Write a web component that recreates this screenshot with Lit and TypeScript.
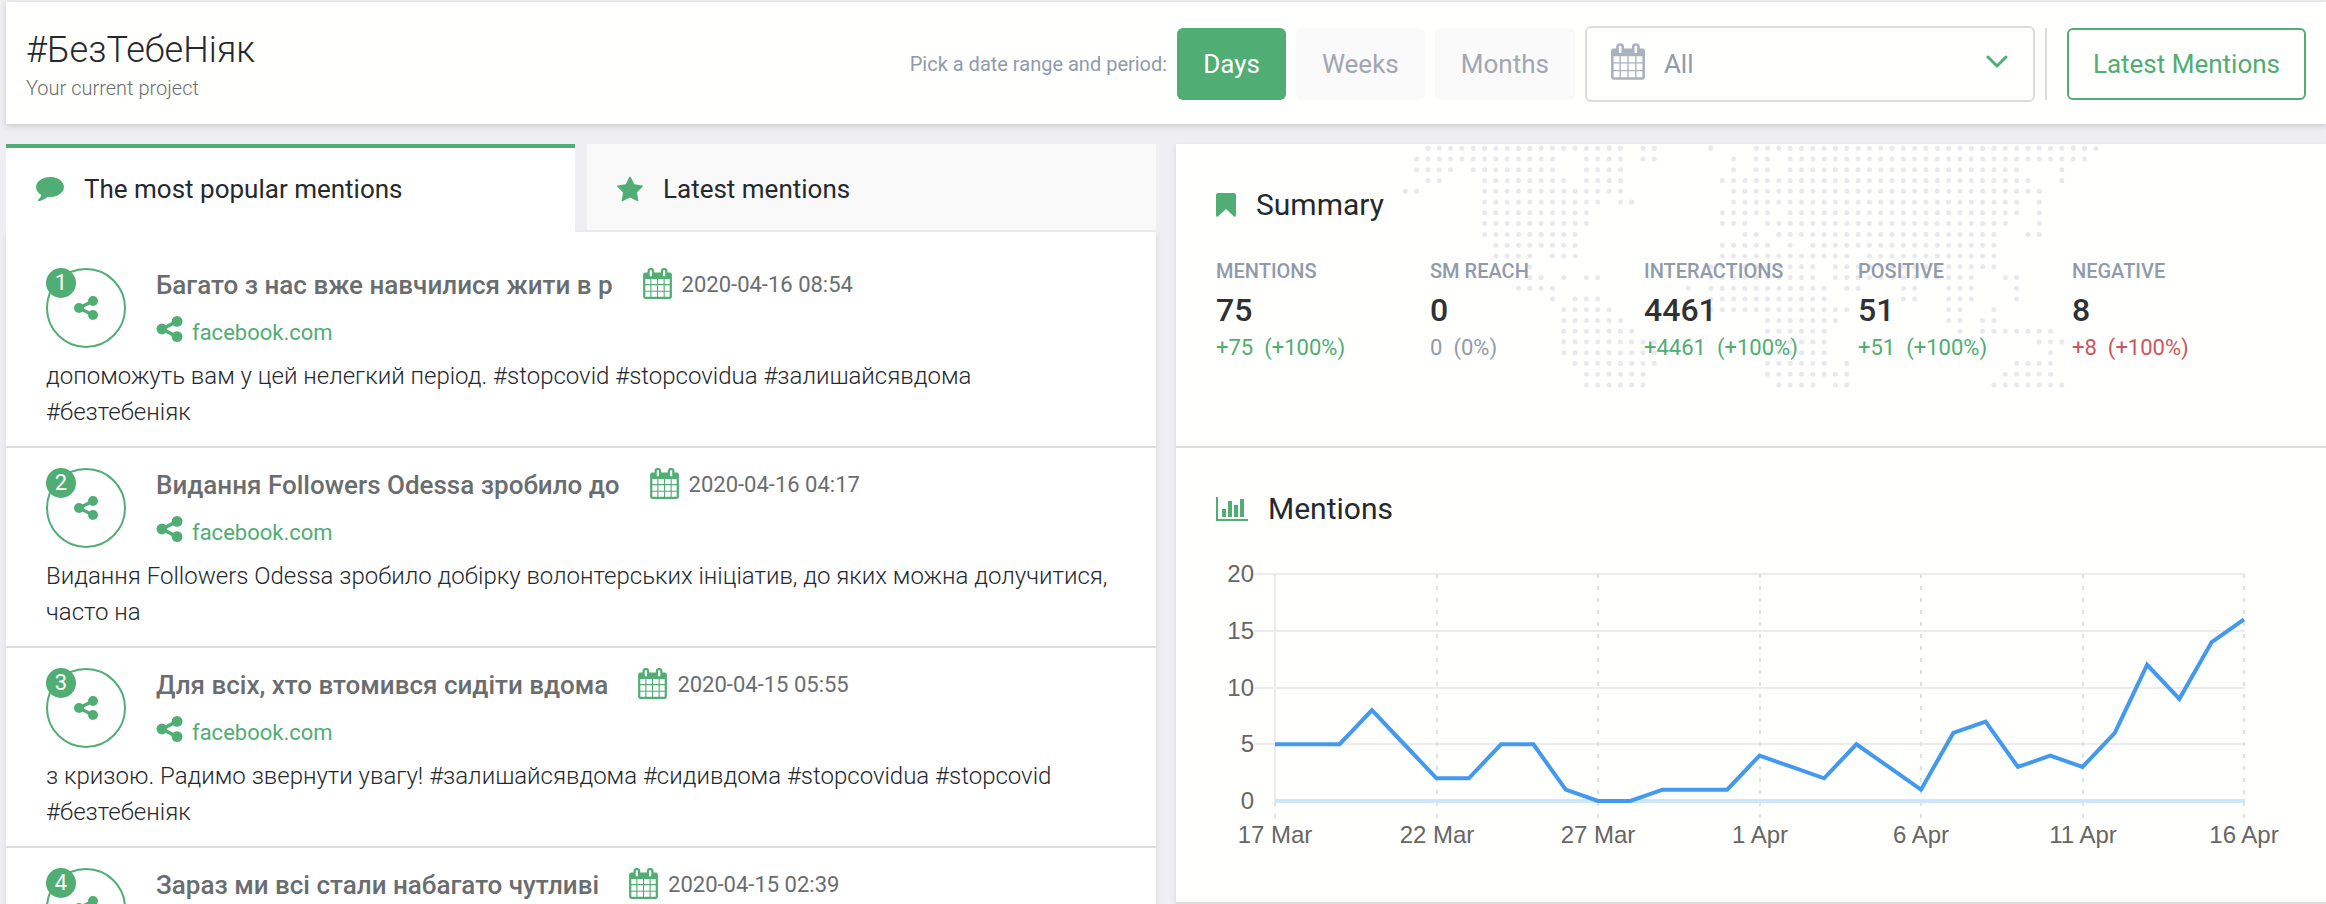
import { LitElement, html, svg, css } from "lit";
import { customElement, state, property } from "lit/decorators.js";
import { classMap } from "lit/directives/class-map.js";

const CALENDAR =
  "M128 1664h288v-288h-288v288zm352 0h320v-288h-320v288zm-352-352h288v-320h-288v320zm352 0h320v-320h-320v320zm-352-384h288v-288h-288v288zm736 736h320v-288h-320v288zm-384-736h320v-288h-320v288zm768 736h288v-288h-288v288zm-384-352h320v-320h-320v320zm-352-864v-288q0-13-9.5-22.5t-22.5-9.5h-64q-13 0-22.5 9.5t-9.5 22.5v288q0 13 9.5 22.5t22.5 9.5h64q13 0 22.5-9.5t9.5-22.5zm736 864h288v-320h-288v320zm-384-384h320v-288h-320v288zm384 0h288v-288h-288v288zm32-480v-288q0-13-9.5-22.5t-22.5-9.5h-64q-13 0-22.5 9.5t-9.5 22.5v288q0 13 9.5 22.5t22.5 9.5h64q13 0 22.5-9.5t9.5-22.5zm384-64v1280q0 52-38 90t-90 38h-1408q-52 0-90-38t-38-90v-1280q0-52 38-90t90-38h128v-96q0-66 47-113t113-47h64q66 0 113 47t47 113v96h384v-96q0-66 47-113t113-47h64q66 0 113 47t47 113v96h128q52 0 90 38t38 90z";

const COMMENT =
  "M1792 896q0 174-120 321.5t-326 233-450 85.5q-70 0-145-8-198 175-460 242-49 14-114 22-17 2-30.5-9t-17.5-29v-1q-3-4-.5-12t2-10 4.5-9.5l6-9 7-8.5 8-9q7-8 31-34.5t34.5-38 31-39.5 32.5-51 27-59 26-76q-157-89-247.5-220t-90.5-281q0-130 71-248.5t191-204.5 286-136.5 348-50.5q244 0 450 85.5t326 233 120 321.5z";

const STAR =
  "M1728 647q0 22-26 48l-363 354 86 500q1 7 1 20 0 21-10.5 35.5t-30.5 14.5q-19 0-40-12l-449-236-449 236q-22 12-40 12-21 0-31.5-14.5t-10.5-35.5q0-6 2-20l86-500-364-354q-25-27-25-48 0-37 56-46l502-73 225-455q19-41 49-41t49 41l225 455 502 73q56 9 56 46z";

const calendarIcon = (cls: string) => html`
  <svg class=${cls} viewBox="0 0 1664 1792" aria-hidden="true"><path fill="currentColor" d=${CALENDAR} /></svg>
`;

const shareIcon = (cls: string) => html`
  <svg class=${cls} viewBox="0 0 24 24" aria-hidden="true">
    <path d="M19 5 L5 12 L19 19" fill="none" stroke="currentColor" stroke-width="3.2" />
    <g fill="currentColor">
      <circle cx="19" cy="5" r="5" />
      <circle cx="5" cy="12" r="5" />
      <circle cx="19" cy="19" r="5" />
    </g>
  </svg>
`;

interface Mention {
  title: string;
  date: string;
  site: string;
  text: string;
}

const MENTIONS: Mention[] = [
  {
    title: "Багато з нас вже навчилися жити в р",
    date: "2020-04-16 08:54",
    site: "facebook.com",
    text: "допоможуть вам у цей нелегкий період. #stopcovid #stopcovidua #залишайсявдома #безтебеніяк",
  },
  {
    title: "Видання Followers Odessa зробило до",
    date: "2020-04-16 04:17",
    site: "facebook.com",
    text: "Видання Followers Odessa зробило добірку волонтерських ініціатив, до яких можна долучитися, часто на",
  },
  {
    title: "Для всіх, хто втомився сидіти вдома",
    date: "2020-04-15 05:55",
    site: "facebook.com",
    text: "з кризою. Радимо звернути увагу! #залишайсявдома #сидивдома #stopcovidua #stopcovid #безтебеніяк",
  },
  {
    title: "Зараз ми всі стали набагато чутливі",
    date: "2020-04-15 02:39",
    site: "",
    text: "",
  },
];

const STATS = [
  { label: "Mentions", value: "75", change: "+75", percent: "(+100%)", tone: "up" },
  { label: "SM reach", value: "0", change: "0", percent: "(0%)", tone: "flat" },
  { label: "Interactions", value: "4461", change: "+4461", percent: "(+100%)", tone: "up" },
  { label: "Positive", value: "51", change: "+51", percent: "(+100%)", tone: "up" },
  { label: "Negative", value: "8", change: "+8", percent: "(+100%)", tone: "down" },
];

// Runs of filled columns [first, last] for every row of the dotted world map.
const MAP_ROWS: number[][][] = [
  [[2, 19], [21, 22], [27, 27], [31, 61]],
  [[1, 13], [16, 19], [21, 22], [29, 29], [31, 32], [34, 60]],
  [[1, 4], [6, 13], [16, 19], [29, 29], [31, 32], [34, 54], [58, 58]],
  [[2, 3], [7, 14], [16, 19], [28, 55], [58, 58]],
  [[0, 1], [7, 19], [29, 56]],
  [[7, 17], [19, 20], [29, 54], [56, 56]],
  [[7, 16], [28, 32], [34, 54], [56, 56]],
  [[7, 16], [28, 30], [32, 53], [56, 56]],
  [[7, 15], [30, 31], [33, 52], [55, 56]],
  [[8, 15], [28, 32], [34, 34], [36, 52]],
  [[8, 11], [13, 15], [28, 39], [41, 52]],
  [[11, 11], [27, 36], [38, 52]],
  [[11, 12], [14, 14], [16, 17], [27, 36], [38, 50], [53, 54]],
  [[10, 13], [25, 25], [27, 37], [39, 40], [44, 45], [48, 50], [54, 54]],
  [[13, 13], [15, 17], [27, 37], [44, 45], [48, 50], [54, 54]],
  [[14, 18], [27, 39], [48, 49], [52, 52]],
  [[14, 19], [32, 38], [48, 49], [51, 52]],
  [[14, 20], [32, 37], [49, 49], [51, 57]],
  [[14, 22], [33, 37], [49, 50], [56, 58]],
  [[14, 22], [32, 37], [57, 57]],
  [[15, 22], [32, 37], [39, 39], [54, 57]],
  [[16, 21], [32, 39], [53, 57]],
  [[16, 21], [33, 36], [38, 39], [52, 58]],
];

@customElement("world-dots")
export class WorldDots extends LitElement {
  static styles = css`
    :host {
      display: block;
    }
    .map {
      display: block;
      width: 702px;
      height: 248px;
    }
  `;

  render() {
    return html`
      <svg class="map" viewBox="0 0 702 248" fill="#e8e8ee" aria-hidden="true">
        ${MAP_ROWS.flatMap((runs, row) =>
          runs.flatMap(([first, last]) =>
            Array.from(
              { length: last - first + 1 },
              (_, i) => svg`<circle cx=${5.3 + 11.32 * (first + i)} cy=${4.3 + 10.76 * row} r="2.5" />`
            )
          )
        )}
      </svg>
    `;
  }
}

const SERIES = [
  5, 5, 5, 8, 5, 2, 2, 5, 5, 1, 0, 0, 1, 1, 1, 4, 3, 2, 5, 3, 1, 6, 7, 3, 4, 3, 6, 12, 9, 14, 16,
];
const DAY_LABELS = ["17 Mar", "22 Mar", "27 Mar", "1 Apr", "6 Apr", "11 Apr", "16 Apr"];

@customElement("mentions-chart")
export class MentionsChart extends LitElement {
  static styles = css`
    :host {
      display: block;
    }
    .chart {
      display: block;
      width: 100%;
      font-family: "Liberation Sans", Arial, sans-serif;
      font-size: 24px;
    }
  `;

  render() {
    const left = 59;
    const right = 1028;
    const top = 14;
    const bottom = 241;
    const x = (day: number) => left + ((right - left) * day) / 30;
    const y = (value: number) => bottom - ((bottom - top) * value) / 20;
    const points = SERIES.map((v, i) => `${x(i)},${y(v)}`).join(" ");
    return html`
      <svg class="chart" viewBox="0 0 1070 300" role="img" aria-label="Mentions per day">
        ${[20, 15, 10, 5, 0].map(
          (v) => svg`
            ${v ? svg`<line x1="38" x2=${right + 1} y1=${Math.round(y(v))} y2=${Math.round(y(v))} stroke="#ececec" stroke-width="2" />` : ""}
            <text x="38" y=${Math.round(y(v)) + 8} text-anchor="end" fill="#666">${v}</text>`
        )}
        <line x1=${left} x2=${left} y1=${top} y2=${bottom} stroke="#ececec" stroke-width="2" />
        ${DAY_LABELS.map((label, i) => {
          const px = Math.round(x(i * 5));
          return svg`
            <line x1=${px} x2=${px} y1=${i ? top : bottom} y2="258" stroke="#e0e0e0" stroke-width="2"
              stroke-dasharray="4 8" stroke-dashoffset=${i ? 0 : 11} />
            <text x=${px} y="283" text-anchor="middle" fill="#666">${label}</text>`;
        })}
        <line x1=${left} x2=${right + 1} y1=${bottom} y2=${bottom} stroke="#cce6fd" stroke-width="4" />
        <polyline points=${points} fill="none" stroke="#4299ee" stroke-width="4" />
      </svg>
    `;
  }
}

@customElement("mention-item")
export class MentionItem extends LitElement {
  @property({ attribute: false }) mention!: Mention;
  @property({ type: Number }) rank = 1;

  static styles = css`
    :host {
      display: block;
      padding: 20px 40px 16px;
      border-bottom: 2px solid #dcdcdc;
    }
    .head {
      display: flex;
      gap: 30px;
    }
    .avatar {
      position: relative;
      box-sizing: border-box;
      flex: none;
      display: grid;
      place-items: center;
      width: 80px;
      height: 80px;
      border: 2px solid #50ad73;
      border-radius: 50%;
      color: #50ad73;
    }
    .rank {
      position: absolute;
      top: -2px;
      left: -2px;
      width: 30px;
      height: 30px;
      border-radius: 50%;
      background: #50ad73;
      color: #fff;
      font-size: 22px;
      line-height: 30px;
      text-align: center;
    }
    .share {
      width: 24px;
      height: 24px;
    }
    .info {
      display: grid;
      gap: 14px;
      align-content: start;
    }
    .row {
      display: flex;
      align-items: flex-start;
      line-height: 34px;
    }
    .title {
      margin: 0 30px 0 0;
      font-size: 26px;
      font-weight: 500;
      color: #6a6d70;
    }
    .calendar {
      width: 29px;
      height: 31px;
      margin-right: 10px;
      color: #50ad73;
    }
    .date {
      font-size: 22px;
      color: #6a6d70;
    }
    .site-icon {
      width: 27px;
      height: 26px;
      margin-right: 9px;
      color: #50ad73;
    }
    .site {
      font-size: 22px;
      color: #50ad73;
      text-decoration: none;
    }
    .text {
      margin: 8px 0 0;
      font-size: 24px;
      font-weight: 300;
      line-height: 36px;
      color: #24292e;
    }
  `;

  render() {
    const m = this.mention;
    return html`
      <div class="head">
        <div class="avatar">
          ${shareIcon("share")}
          <span class="rank">${this.rank}</span>
        </div>
        <div class="info">
          <div class="row">
            <h3 class="title">${m.title}</h3>
            ${calendarIcon("calendar")}
            <time class="date">${m.date}</time>
          </div>
          ${m.site
            ? html`
                <div class="row">
                  ${shareIcon("site-icon")}
                  <a class="site" href="#mention-${this.rank}">${m.site}</a>
                </div>
              `
            : ""}
        </div>
      </div>
      ${m.text ? html`<p class="text">${m.text}</p>` : ""}
    `;
  }
}

@customElement("app-root")
export class AppRoot extends LitElement {
  @state() private period = "Days";
  @state() private tab = "popular";

  static styles = css`
    :host {
      display: block;
      box-sizing: border-box;
      height: 100vh;
      overflow: hidden;
      padding: 2px 0 0 6px;
      background: #efeff3;
      color: #24292e;
      font-family: Roboto, sans-serif;
    }
    button,
    select {
      font-family: inherit;
    }
    .header {
      display: flex;
      align-items: center;
      justify-content: space-between;
      padding: 24px 20px 22px;
      background: #fffffd;
      box-shadow: 0 2px 6px rgba(0, 0, 0, 0.16);
    }
    .project {
      margin: 0;
      font-size: 36px;
      font-weight: 300;
      line-height: 48px;
    }
    .caption {
      margin: 0;
      font-size: 20px;
      font-weight: 300;
      line-height: 28px;
      color: #6a6d70;
    }
    .controls {
      display: flex;
      align-items: center;
      gap: 10px;
    }
    .hint {
      font-size: 20px;
      color: #8f9bab;
    }
    .btn {
      box-sizing: border-box;
      height: 72px;
      padding: 0 26px;
      border: 0;
      border-radius: 6px;
      background: #fafafa;
      color: #a2a6b2;
      font-size: 26px;
      cursor: pointer;
    }
    .btn.active {
      background: #50ad73;
      color: #fff;
    }
    .btn.outline {
      padding: 0 24px;
      border: 2px solid #50ad73;
      background: transparent;
      color: #50ad73;
    }
    .picker {
      display: grid;
      align-items: center;
      width: 450px;
    }
    .picker > * {
      grid-area: 1 / 1;
    }
    .select {
      appearance: none;
      box-sizing: border-box;
      width: 100%;
      height: 76px;
      padding: 0 60px 0 77px;
      border: 2px solid #dcdcdc;
      border-radius: 6px;
      background: transparent;
      color: #8f9bab;
      font-size: 26px;
    }
    .picker-calendar {
      width: 34px;
      height: 37px;
      margin: 0 0 6px 26px;
      color: #a9b2be;
    }
    .chevron {
      justify-self: end;
      width: 22px;
      height: 14px;
      margin: 0 27px 4px 0;
      color: #50ad73;
      pointer-events: none;
    }
    .divider {
      width: 2px;
      height: 72px;
      margin-right: 10px;
      background: #dcdcdc;
    }
    .columns {
      display: grid;
      grid-template-columns: minmax(0, 1fr) minmax(0, 1fr);
      align-items: start;
      gap: 20px;
      margin-top: 20px;
    }
    .tabs {
      display: grid;
      grid-template-columns: minmax(0, 1fr) minmax(0, 1fr);
      gap: 12px;
    }
    .tab {
      display: flex;
      align-items: center;
      gap: 20px;
      height: 88px;
      padding: 0 30px 2px;
      border: 0;
      border-top: 4px solid #f9f9f9;
      background: #f9f9f9;
      box-shadow: inset 0 -2px #ebebeb;
      color: #24292e;
      font-size: 26px;
      cursor: pointer;
    }
    .tab.active {
      border-top-color: #50ad73;
      background: #fff;
      box-shadow: none;
    }
    .comment {
      width: 28px;
      height: 24px;
      color: #50ad73;
    }
    .star {
      width: 26px;
      height: 26px;
      color: #50ad73;
    }
    .list {
      padding-top: 16px;
      background: #fff;
      box-shadow: 0 2px 6px rgba(0, 0, 0, 0.1);
    }
    .panel {
      background: #fffffd;
      box-shadow: 0 2px 6px rgba(0, 0, 0, 0.1);
    }
    .section {
      position: relative;
      padding: 40px 40px 42px;
      border-bottom: 2px solid #dcdcdc;
    }
    .section.summary {
      padding-bottom: 82px;
    }
    .world {
      position: absolute;
      top: 0;
      left: 50%;
      transform: translateX(-50%);
    }
    .heading {
      position: relative;
      display: flex;
      align-items: center;
      gap: 20px;
      margin: 0 0 28px;
      font-size: 30px;
      font-weight: 400;
      line-height: 42px;
    }
    .heading.wide {
      margin-bottom: 30px;
    }
    .bookmark {
      width: 20px;
      height: 24px;
      color: #50ad73;
    }
    .bars {
      width: 32px;
      height: 24px;
      color: #50ad73;
    }
    .stats {
      position: relative;
      display: grid;
      grid-template-columns: repeat(5, minmax(0, 1fr));
      margin: 0;
    }
    .label {
      font-size: 20px;
      font-weight: 500;
      line-height: 34px;
      text-transform: uppercase;
      color: #8f9bab;
    }
    .value {
      margin: 0;
      font-size: 32px;
      font-weight: 500;
      line-height: 44px;
      color: #2f3133;
    }
    .change {
      display: flex;
      gap: 11px;
      margin: 0;
      font-size: 22px;
      line-height: 32px;
    }
    .up {
      color: #50ad73;
    }
    .flat {
      color: #8f9bab;
    }
    .down {
      color: #cb5560;
    }
  `;

  private renderTab(id: string, label: string, icon: unknown) {
    const active = this.tab === id;
    return html`
      <button
        class=${classMap({ tab: true, active })}
        role="tab"
        aria-selected=${active ? "true" : "false"}
        @click=${() => (this.tab = id)}
      >
        ${icon}<span>${label}</span>
      </button>
    `;
  }

  render() {
    return html`
      <header class="header">
        <div>
          <h1 class="project">#БезТебеНіяк</h1>
          <p class="caption">Your current project</p>
        </div>
        <div class="controls">
          <label class="hint" for="range">Pick a date range and period:</label>
          ${["Days", "Weeks", "Months"].map(
            (p) => html`
              <button class=${classMap({ btn: true, active: this.period === p })} @click=${() => (this.period = p)}>${p}</button>
            `
          )}
          <div class="picker">
            ${calendarIcon("picker-calendar")}
            <svg class="chevron" viewBox="0 0 22 14" aria-hidden="true">
              <path d="M2 2 L11 11 L20 2" fill="none" stroke="currentColor" stroke-width="3" stroke-linecap="round" />
            </svg>
            <select class="select" id="range">
              <option>All</option>
            </select>
          </div>
          <span class="divider"></span>
          <button class="btn outline">Latest Mentions</button>
        </div>
      </header>

      <main class="columns">
        <section>
          <div class="tabs" role="tablist">
            ${this.renderTab(
              "popular",
              "The most popular mentions",
              html`<svg class="comment" viewBox="0 256 1792 1536" aria-hidden="true"><path fill="currentColor" d=${COMMENT} /></svg>`
            )}
            ${this.renderTab(
              "latest",
              "Latest mentions",
              html`<svg class="star" viewBox="64 0 1664 1664" aria-hidden="true"><path fill="currentColor" d=${STAR} /></svg>`
            )}
          </div>
          <div class="list">
            ${MENTIONS.map((m, i) => html`<mention-item .mention=${m} .rank=${i + 1}></mention-item>`)}
          </div>
        </section>

        <div class="panel">
          <section class="section summary">
            <world-dots class="world"></world-dots>
            <h2 class="heading">
              <svg class="bookmark" viewBox="0 0 20 24" aria-hidden="true">
                <path fill="currentColor" d="M2 0h16q2 0 2 2v20q0 2.6-2 1.4L10 16 2 23.4Q0 24.600 0 22V2Q0 0 2 0z" />
              </svg>
              Summary
            </h2>
            <dl class="stats">
              ${STATS.map(
                (s) => html`
                  <div>
                    <dt class="label">${s.label}</dt>
                    <dd class="value">${s.value}</dd>
                    <dd class="change ${s.tone}"><span>${s.change}</span><span>${s.percent}</span></dd>
                  </div>
                `
              )}
            </dl>
          </section>
          <section class="section">
            <h2 class="heading wide">
              <svg class="bars" viewBox="0 0 32 24" aria-hidden="true">
                <path fill="currentColor" d="M0 0h2v22h30v2H0zM6 12h4v8H6zM12 4h4v16h-4zM18 8h4v12h-4zM24 2h4v18h-4z" />
              </svg>
              Mentions
            </h2>
            <mentions-chart></mentions-chart>
          </section>
        </div>
      </main>
    `;
  }
}
